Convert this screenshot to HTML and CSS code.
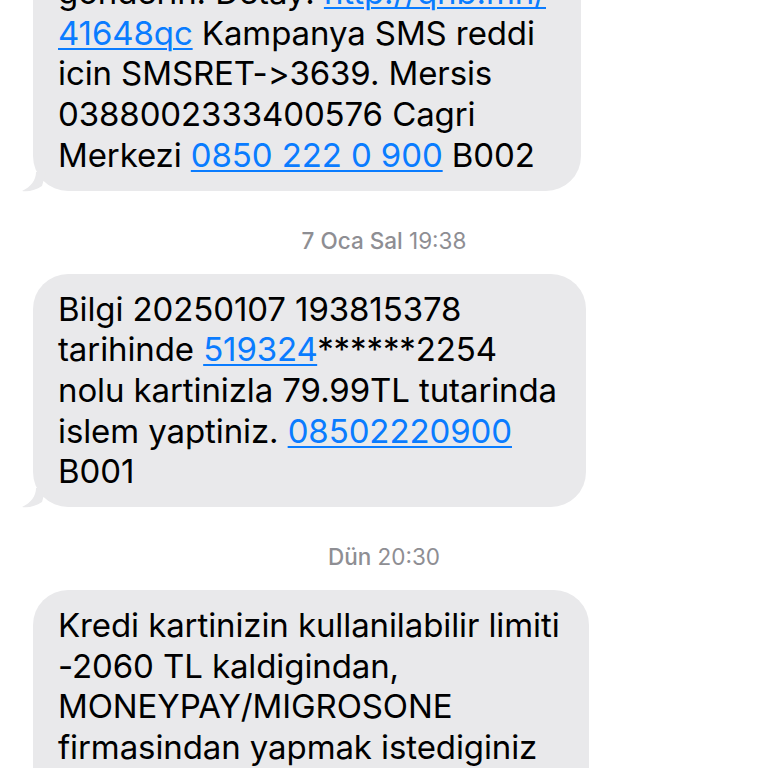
FILE: index.html
```html
<!DOCTYPE html>
<html lang="tr">
<head>
<meta charset="utf-8">
<title>Mesajlar</title>
<link rel="stylesheet" href="styles.css">
</head>
<body>
<main class="thread">
  <div class="bubble bubble-first">
    <p class="text">gonderin. Detay: <a class="link" href="#">http://qnb.mn/</a><br><a class="link" href="#">41648qc</a> Kampanya SMS reddi<br>icin SMSRET-&gt;3639. Mersis<br>0388002333400576 Cagri<br>Merkezi <a class="link" href="#">0850 222 0 900</a> B002</p>
    <svg class="tail" viewBox="0 0 24 20" aria-hidden="true"><path d="M14 0 C14 8 9 15 0 19 C7 20 14 18 20 14 L24 0 Z"/></svg>
  </div>

  <div class="stamp"><span class="stamp-day">7 Oca Sal</span> 19:38</div>

  <div class="bubble">
    <p class="text">Bilgi 20250107 193815378<br>tarihinde <a class="link" href="#">519324</a>******2254<br>nolu kartinizla 79.99TL tutarinda<br>islem yaptiniz. <a class="link" href="#">08502220900</a><br>B001</p>
    <svg class="tail" viewBox="0 0 24 20" aria-hidden="true"><path d="M14 0 C14 8 9 15 0 19 C7 20 14 18 20 14 L24 0 Z"/></svg>
  </div>

  <div class="stamp"><span class="stamp-day">Dün</span> 20:30</div>

  <div class="bubble">
    <p class="text">Kredi kartinizin kullanilabilir limiti<br>-2060 TL kaldigindan,<br>MONEYPAY/MIGROSONE<br>firmasindan yapmak istediginiz<br>islem onaylanmamistir.</p>
  </div>
</main>
</body>
</html>
```
FILE: styles.css
```css
html, body {
  margin: 0;
  padding: 0;
  background: #ffffff;
}

body {
  width: 768px;
  height: 768px;
  overflow: hidden;
  font-family: "Inter", "Liberation Sans", sans-serif;
}

.thread {
  display: flex;
  flex-direction: column;
  align-items: flex-start;
  padding-left: 33px;
}

.bubble {
  position: relative;
  background: #e9e9eb;
  border-radius: 35px;
  padding: 15px 29px 15px 25px;
}

.bubble-first {
  margin-top: -43px;
  box-sizing: border-box;
  width: 548px;
}

.text {
  margin: 0;
  font-size: 33px;
  line-height: 40.7px;
  color: #000000;
  letter-spacing: -0.1px;
  white-space: nowrap;
}

.link {
  color: #0a7cff;
  text-decoration: underline;
  text-decoration-thickness: 2px;
  text-underline-offset: 3px;
}

.tail {
  position: absolute;
  left: -11px;
  bottom: -1px;
  width: 24px;
  height: 20px;
  fill: #e9e9eb;
}

.stamp {
  align-self: stretch;
  margin: 38px 0 21px -33px;
  text-align: center;
  font-size: 22.5px;
  line-height: 24px;
  color: #8e8e93;
}

.stamp-day {
  font-weight: 500;
}
```
